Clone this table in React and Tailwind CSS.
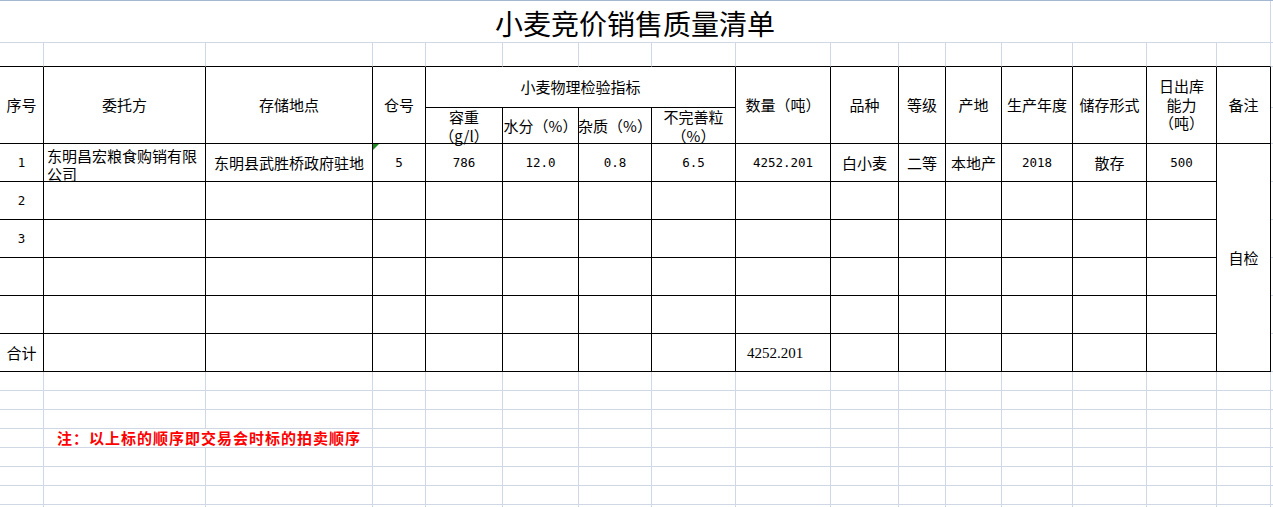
import React from "react";

const T = "border-r border-b border-black";
const GR = "border-r border-b border-[#d0d7e5]";
const R2 = "border-r border-b border-r-[#d0d7e5] border-b-black";
const C = "flex items-center justify-center text-center";
const NUM = "font-['DejaVu_Sans_Mono',monospace] text-[12.5px]";

function Cell({ className = "", children }) {
  return <div className={className}>{children}</div>;
}

export default function App() {
  const cols = Array.from({ length: 16 });
  const dataRows = [
    null,
    { a: "2" },
    { a: "3" },
    { a: "" },
    { a: "" },
  ];
  return (
    <div className="w-[1273px] h-[507px] overflow-hidden bg-white border-t border-[#a5b8d1] text-black font-['Noto_Sans_CJK_SC',sans-serif] text-[15px] leading-[18px]">
      <div className="grid grid-cols-[44px_162px_167px_53px_77px_76px_73px_84px_95px_68px_47px_56px_71px_74px_70px_54px_2px] grid-rows-[42px_24px_41px_36px_38px_38px_38px_38px_38px_38px_19px_19px_19px_19px_19px_19px_19px_2px]">
        {/* Title */}
        <Cell className={`col-span-16 ${GR} ${C} text-[28px] leading-[32px] pt-[2px]`}>小麦竞价销售质量清单</Cell>
        <Cell className="border-b border-[#d0d7e5]" />

        {/* Row 2 */}
        {cols.map((_, i) => (
          <Cell key={"r2" + i} className={R2} />
        ))}
        <Cell className="border-b border-[#d0d7e5]" />

        {/* Header */}
        <Cell className={`row-span-2 ${T} ${C}`}>序号</Cell>
        <Cell className={`row-span-2 ${T} ${C}`}>委托方</Cell>
        <Cell className={`row-span-2 ${T} ${C}`}>存储地点</Cell>
        <Cell className={`row-span-2 ${T} ${C}`}>仓号</Cell>
        <Cell className={`col-span-4 ${T} ${C}`}>小麦物理检验指标</Cell>
        <Cell className={`row-span-2 ${T} ${C}`}>数量（吨）</Cell>
        <Cell className={`row-span-2 ${T} ${C}`}>品种</Cell>
        <Cell className={`row-span-2 ${T} ${C}`}>等级</Cell>
        <Cell className={`row-span-2 ${T} ${C}`}>产地</Cell>
        <Cell className={`row-span-2 ${T} ${C} whitespace-nowrap`}>生产年度</Cell>
        <Cell className={`row-span-2 ${T} ${C} whitespace-nowrap`}>储存形式</Cell>
        <Cell className={`row-span-2 ${T} ${C} leading-[18.5px]`}>
          <div>
            日出库
            <br />
            能力
            <br />
            （吨）
          </div>
        </Cell>
        <Cell className={`row-span-2 ${T} ${C}`}>备注</Cell>
        <Cell className="border-b border-[#d0d7e5]" />
        <Cell className={`${T} ${C} leading-[19px]`}>
          <div>
            容重
            <br />
            （g/l）
          </div>
        </Cell>
        <Cell className={`${T} ${C} whitespace-nowrap`}>水分（%）</Cell>
        <Cell className={`${T} ${C} whitespace-nowrap`}>杂质（%）</Cell>
        <Cell className={`${T} ${C} leading-[19px]`}>
          <div>
            不完善粒
            <br />
            （%）
          </div>
        </Cell>
        <Cell className="border-b border-[#d0d7e5]" />

        {/* Data row 1 */}
        <Cell className={`${T} ${C} ${NUM}`}>1</Cell>
        <Cell className={`${T} pl-[3px] pt-[3px] leading-[17.5px]`}>东明昌宏粮食购销有限公司</Cell>
        <Cell className={`${T} ${C} whitespace-nowrap`}>东明县武胜桥政府驻地</Cell>
        <Cell className={`${T} ${C} ${NUM} relative`}>
          <span className="absolute top-0 left-0 w-0 h-0 border-t-[6px] border-t-[#1f8a1f] border-r-[6px] border-r-transparent" />
          5
        </Cell>
        <Cell className={`${T} ${C} ${NUM}`}>786</Cell>
        <Cell className={`${T} ${C} ${NUM}`}>12.0</Cell>
        <Cell className={`${T} ${C} ${NUM}`}>0.8</Cell>
        <Cell className={`${T} ${C} ${NUM}`}>6.5</Cell>
        <Cell className={`${T} ${C} ${NUM}`}>4252.201</Cell>
        <Cell className={`${T} ${C}`}>白小麦</Cell>
        <Cell className={`${T} ${C}`}>二等</Cell>
        <Cell className={`${T} ${C}`}>本地产</Cell>
        <Cell className={`${T} ${C} ${NUM}`}>2018</Cell>
        <Cell className={`${T} ${C}`}>散存</Cell>
        <Cell className={`${T} ${C} ${NUM}`}>500</Cell>
        <Cell className={`row-span-6 ${T} ${C}`}>自检</Cell>
        <Cell className="border-b border-[#d0d7e5]" />

        {/* Data rows 2-5 */}
        {dataRows.slice(1).map((r, ri) => (
          <React.Fragment key={"d" + ri}>
            <Cell className={`${T} ${C} ${NUM}`}>{r.a}</Cell>
            {Array.from({ length: 14 }).map((_, i) => (
              <Cell key={i} className={T} />
            ))}
            <Cell className="border-b border-[#d0d7e5]" />
          </React.Fragment>
        ))}

        {/* Total row */}
        <Cell className={`${T} ${C}`}>合计</Cell>
        <Cell className={T} />
        <Cell className={T} />
        <Cell className={T} />
        <Cell className={T} />
        <Cell className={T} />
        <Cell className={T} />
        <Cell className={T} />
        <Cell className={`${T} flex items-center pl-[11px] font-['Liberation_Serif',serif] text-[15px]`}>4252.201</Cell>
        <Cell className={T} />
        <Cell className={T} />
        <Cell className={T} />
        <Cell className={T} />
        <Cell className={T} />
        <Cell className={T} />
        <Cell className="border-b border-[#d0d7e5]" />

        {/* Blank rows */}
        {[0, 1, 2].map((k) => (
          <React.Fragment key={"b" + k}>
            {cols.map((_, i) => (
              <Cell key={i} className={GR} />
            ))}
            <Cell className="border-b border-[#d0d7e5]" />
          </React.Fragment>
        ))}

        {/* Note row */}
        <Cell className={GR} />
        <Cell className={`col-span-2 ${GR} flex items-center pl-[13px] whitespace-nowrap font-bold text-[#ff0000] tracking-[1px] text-[15px]`}>
          注：以上标的顺序即交易会时标的拍卖顺序
        </Cell>
        {Array.from({ length: 13 }).map((_, i) => (
          <Cell key={"n" + i} className={GR} />
        ))}
        <Cell className="border-b border-[#d0d7e5]" />

        {[0, 1, 2].map((k) => (
          <React.Fragment key={"c" + k}>
            {cols.map((_, i) => (
              <Cell key={i} className={GR} />
            ))}
            <Cell className="border-b border-[#d0d7e5]" />
          </React.Fragment>
        ))}

        {/* Last partial row */}
        {cols.map((_, i) => (
          <Cell key={"l" + i} className="border-r border-[#d0d7e5]" />
        ))}
        <Cell />
      </div>
    </div>
  );
}
